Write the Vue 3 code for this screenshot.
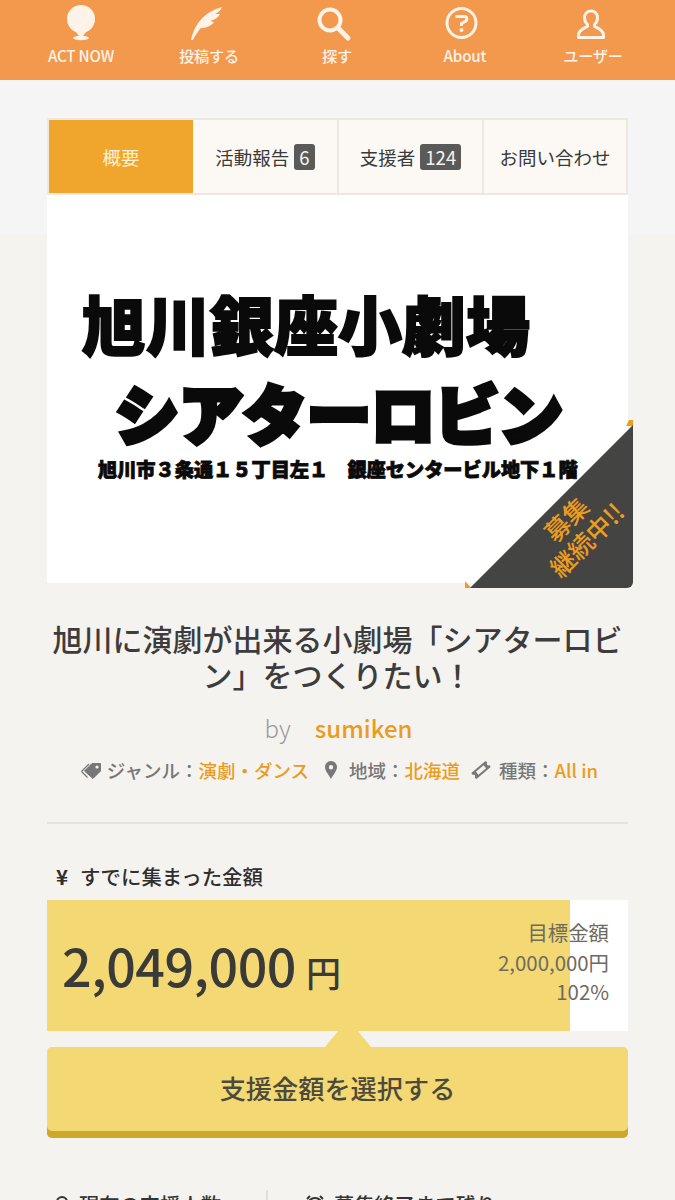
<script setup>
const navItems = [
  { label: 'ACT NOW', icon: 'act' },
  { label: '投稿する', icon: 'pen' },
  { label: '探す', icon: 'search' },
  { label: 'About', icon: 'about' },
  { label: 'ユーザー', icon: 'user' },
]

const tabs = [
  { label: '概要', active: true },
  { label: '活動報告', count: 6 },
  { label: '支援者', count: 124 },
  { label: 'お問い合わせ' },
]

const progress = 90
</script>

<template>
  <div class="page">
    <header class="nav">
      <a v-for="item in navItems" :key="item.label" class="nav-item">
        <svg class="nav-icon" viewBox="0 0 40 40">
          <template v-if="item.icon === 'act'">
            <circle cx="20" cy="17" r="14" fill="#fdf3e9" />
            <path d="M15 30h10l-3 4h-4z" fill="#fdf3e9" />
            <ellipse cx="20" cy="36" rx="8" ry="2.2" fill="#fdf3e9" />
          </template>
          <path
            v-else-if="item.icon === 'pen'"
            d="M2 38C5 25 12 11 33 5c-1 3-3 5-7 7l5 0c-2 4-6 6-10 7l4 1c-3 4-8 6-13 6-3 3-6 8-8 12z"
            fill="#fdf3e9"
          />
          <template v-else-if="item.icon === 'search'">
            <circle cx="13" cy="18" r="10.5" fill="none" stroke="#fdf3e9" stroke-width="4" />
            <path d="M21 26l10 10" stroke="#fdf3e9" stroke-width="5" stroke-linecap="round" />
          </template>
          <template v-else-if="item.icon === 'about'">
            <circle cx="16.5" cy="21" r="14.5" fill="none" stroke="#fdf3e9" stroke-width="3" />
            <path d="M10.500 14.500h9c3 0 3 4 .5 5l-3.500 2v2.500" fill="none" stroke="#fdf3e9" stroke-width="3" />
            <circle cx="16.500" cy="28" r="2" fill="#fdf3e9" />
          </template>
          <path
            v-else
            d="M18 9c-4 0-6.500 3-6.500 7 0 3 1.500 5 3 6.500v2c-3 1.500-8 3-9 8v3h25v-3c-1-5-6-6.500-9-8v-2c1.500-1.500 3-3.500 3-6.500 0-4-2.500-7-6.500-7z"
            fill="none"
            stroke="#fdf3e9"
            stroke-width="3"
            stroke-linejoin="round"
          />
        </svg>
        <span class="nav-label">{{ item.label }}</span>
      </a>
    </header>

    <main class="content">
      <nav class="tabs">
        <a v-for="tab in tabs" :key="tab.label" class="tab" :class="{ active: tab.active }">
          {{ tab.label }}
          <span v-if="tab.count" class="count">{{ tab.count }}</span>
        </a>
      </nav>

      <div class="cover">
        <div class="cover-art">
          <div class="art-line art-kanji">旭川銀座小劇場</div>
          <div class="art-line art-kana">シアターロビン</div>
          <div class="art-line art-address">旭川市３条通１５丁目左１　銀座センタービル地下１階</div>
        </div>
        <div class="ribbon">
          <svg class="ribbon-shape" viewBox="0 0 168 168">
            <path d="M164 0h4v6h-7zM0 161l6 7H0z" fill="#ee9c1c" />
            <path d="M168 5v157a6 6 0 0 1-6 6H5z" fill="#444443" />
          </svg>
          <div class="ribbon-text">募集<br />継続中!!</div>
        </div>
      </div>

      <h1 class="title">旭川に演劇が出来る小劇場「シアターロビン」をつくりたい！</h1>

      <div class="owner">
        <span class="by">by</span>
        <a class="owner-name">sumiken</a>
      </div>

      <div class="meta">
        <svg class="meta-icon tag" viewBox="0 0 22 18">
          <path d="M1.500 10.500L9 3M1.500 10.500l6 6" fill="none" stroke="#777" stroke-width="1.200" />
          <path d="M4.500 10L12 2.500h8.500v7.500l-7.500 7.500z" fill="#777" stroke="#777" stroke-linejoin="round" />
          <circle cx="17" cy="6" r="1.600" fill="#f4f3ef" />
        </svg>
        <span class="meta-text">ジャンル：<a>演劇・ダンス</a></span>
        <svg class="meta-icon pin" viewBox="0 0 14 20">
          <path fill-rule="evenodd" d="M7 1a6 6 0 0 0-6 6c0 4 4 8 6 12 2-4 6-8 6-12a6 6 0 0 0-6-6zm0 4a2.200 2.200 0 1 1 0 4.400A2.200 2.200 0 0 1 7 5z" fill="#777" />
        </svg>
        <span class="meta-text">地域：<a>北海道</a></span>
        <svg class="meta-icon ticket" viewBox="0 0 20 18">
          <g transform="rotate(-40 10 9)">
            <rect x="0.500" y="5" width="19" height="8" rx="1" fill="#777" />
            <rect x="5" y="7" width="10" height="4" fill="#f4f3ef" />
            <circle cx="0.500" cy="9" r="1.500" fill="#f4f3ef" />
            <circle cx="19.500" cy="9" r="1.500" fill="#f4f3ef" />
          </g>
        </svg>
        <span class="meta-text">種類：<a>All in</a></span>
      </div>

      <hr class="rule" />

      <div class="raised-label"><span class="yen">¥</span>すでに集まった金額</div>
      <div class="progress">
        <div class="progress-fill" :style="{ width: progress + '%' }"></div>
        <div class="amount">2,049,000<span class="amount-unit">円</span></div>
        <div class="goal">
          <div>目標金額</div>
          <div>2,000,000円</div>
          <div>102%</div>
        </div>
      </div>

      <a class="support-btn">支援金額を選択する</a>

      <div class="stats">
        <div class="stat stat-left">
          <svg class="stat-icon" viewBox="0 0 18 18">
            <circle cx="7" cy="7" r="5" fill="none" stroke="#333" stroke-width="2" />
            <path d="M1 18c1-4 3-5 6-5s5 1 6 5" fill="none" stroke="#333" stroke-width="2" />
          </svg>
          現在の支援人数
        </div>
        <div class="stat stat-right">
          <svg class="stat-icon" viewBox="0 0 18 18">
            <circle cx="9" cy="10" r="7" fill="none" stroke="#333" stroke-width="2" />
            <path d="M9 6v4l3 2M1 4l3-3M17 4l-3-3" fill="none" stroke="#333" stroke-width="2" />
          </svg>
          募集終了まで残り
        </div>
      </div>
    </main>
  </div>
</template>

<style>
html, body {
  margin: 0;
  height: 1200px;
  overflow: hidden;
  background: #f4f3ef;
}
</style>

<style scoped>
.page {
  font-family: "Noto Sans CJK JP", "Noto Sans", sans-serif;
  color: #333;
  background: linear-gradient(#f5f5f5 235px, #f4f3ef 235px);
}

.nav {
  height: 80px;
  box-sizing: border-box;
  padding: 2px 18px 0 17px;
  display: grid;
  grid-template-columns: repeat(5, 1fr);
  background: #f2994d;
}

.nav-item {
  display: flex;
  flex-direction: column;
  align-items: center;
}

.nav-icon {
  width: 40px;
  height: 40px;
}

.nav-label {
  margin-top: 1px;
  font-size: 15.200px;
  line-height: 24px;
  font-weight: 500;
  letter-spacing: -0.2px;
  color: #fdf3e9;
}

.content {
  padding: 38px 47px 0;
}

.tabs {
  display: grid;
  grid-template-columns: 144px 146px 145px 1fr;
  height: 77px;
  box-sizing: border-box;
  border: 2px solid #ece9e3;
  background: #fcf9f5;
}

.tab {
  display: flex;
  align-items: center;
  justify-content: center;
  gap: 5px;
  border-right: 2px solid #ece9e3;
  font-size: 18.500px;
  color: #3a3a3a;
  white-space: nowrap;
}

.tab:last-child {
  border-right: none;
}

.tab.active {
  background: #f0a52c;
  border-right: none;
  color: #fdf1dc;
}

.count {
  padding: 0 5px;
  height: 26px;
  line-height: 26px;
  border-radius: 3px;
  background: #5a5a58;
  color: #f5f5f2;
  font-size: 18.500px;
}

.cover {
  position: relative;
  height: 388px;
  background: #fff;
}

.cover-art {
  padding-top: 84px;
  color: #0a0a0a;
  font-weight: 900;
  white-space: nowrap;
}

.art-line {
  -webkit-text-stroke: 2px #0a0a0a;
}

.art-kanji {
  padding-left: 35px;
  font-size: 64px;
  line-height: 86px;
}

.art-kana {
  padding-left: 68px;
  font-size: 64px;
  line-height: 92px;
  -webkit-text-stroke-width: 5px;
}

.art-address {
  margin-top: -2px;
  padding-left: 51px;
  font-size: 19.200px;
  line-height: 28px;
  -webkit-text-stroke-width: 0.800px;
}

.ribbon {
  position: absolute;
  right: -5px;
  bottom: -5px;
  width: 168px;
  height: 168px;
}

.ribbon-shape {
  display: block;
  width: 168px;
  height: 168px;
}

.ribbon-text {
  position: absolute;
  left: 51px;
  top: 80px;
  width: 120px;
  transform: rotate(-45deg);
  text-align: center;
  white-space: nowrap;
  font-size: 25px;
  line-height: 29px;
  font-weight: 500;
  color: #ee9c1c;
}

.title {
  margin: 37px 0 0;
  font-size: 30px;
  line-height: 36px;
  font-weight: 500;
  text-align: center;
  color: #3c3c3c;
}

.owner {
  margin-top: 15px;
  display: flex;
  justify-content: center;
  gap: 24px;
  padding-left: 2px;
  height: 40px;
  align-items: center;
  font-size: 24px;
}

.by {
  font-weight: 300;
  color: #9a9a9a;
}

.owner-name {
  font-weight: 500;
  color: #eb9c1e;
}

.meta {
  margin-top: 6px;
  padding-left: 3px;
  display: flex;
  justify-content: center;
  align-items: center;
  height: 34px;
  font-size: 18.500px;
  font-weight: 500;
  color: #777;
  white-space: nowrap;
}

.meta-text a {
  color: #eb9c1e;
}

.meta-icon {
  flex: none;
}

.tag {
  width: 22px;
  height: 18px;
  margin-right: 5px;
}

.pin {
  width: 14px;
  height: 20px;
  margin: 0 11px 0 15px;
}

.ticket {
  width: 20px;
  height: 18px;
  margin: 0 8px 0 11px;
}

.rule {
  margin: 35px 0 0;
  border: none;
  height: 2px;
  background: #e5e4e0;
}

.raised-label {
  margin-top: 38px;
  font-size: 20.400px;
  line-height: 28px;
  font-weight: 500;
  color: #2e2e2e;
}

.yen {
  display: inline-block;
  width: 33px;
  padding-left: 9px;
  box-sizing: border-box;
  font-weight: 700;
}

.progress {
  position: relative;
  margin-top: 10px;
  height: 131px;
  display: flex;
  align-items: center;
  justify-content: space-between;
  padding: 0 19px 0 15px;
  background: #fff;
}

.progress-fill {
  position: absolute;
  left: 0;
  top: 0;
  bottom: 0;
  background: #f3d873;
}

.amount {
  position: relative;
  margin-top: -2px;
  font-size: 52px;
  font-weight: 500;
  color: #3a3a38;
  letter-spacing: -0.5px;
}

.amount-unit {
  margin-left: 10px;
  font-size: 35px;
}

.goal {
  position: relative;
  margin-top: -6px;
  text-align: right;
  font-size: 20.400px;
  line-height: 29.500px;
  color: #6d6b60;
}

.support-btn {
  position: relative;
  display: flex;
  align-items: center;
  justify-content: center;
  margin-top: 16px;
  height: 91px;
  box-sizing: border-box;
  padding-bottom: 9px;
  border-radius: 5px;
  background: #f3d873;
  box-shadow: inset 0 -7px 0 #cfa82a;
  font-size: 26.200px;
  font-weight: 500;
  color: #4d4a3c;
}

.support-btn::before {
  content: "";
  position: absolute;
  left: 278px;
  top: -17px;
  width: 46px;
  height: 17px;
  background: #f3d873;
  clip-path: polygon(14px 0, 32px 0, 100% 100%, 0 100%);
}

.stats {
  margin-top: 52px;
  display: flex;
  font-size: 20.300px;
  line-height: 28px;
  font-weight: 500;
  color: #333;
}

.stat {
  display: flex;
  align-items: center;
  white-space: nowrap;
}

.stat-left {
  width: 221px;
  gap: 6px;
  padding-left: 8px;
  box-sizing: border-box;
  border-right: 2px solid #e0dfdb;
}

.stat-right {
  gap: 10px;
  padding-left: 38px;
}

.stat-icon {
  width: 18px;
  height: 18px;
}
</style>
